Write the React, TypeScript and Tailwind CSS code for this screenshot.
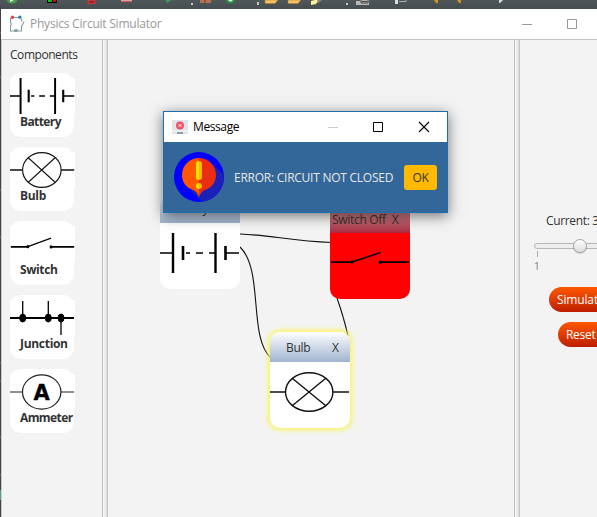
import type { ReactNode } from 'react';

type DrawingProps = { className: string; viewBox?: string };

function BatteryDrawing({ className, viewBox = '0 0 80 50' }: DrawingProps) {
  return (
    <svg viewBox={viewBox} preserveAspectRatio="none" className={className} fill="none" stroke="#000">
      <path d="M0 25H13M26 25H30M36 25H43M49 25H55M65 25H79" strokeWidth="1.4" />
      <path d="M13 5V45M55.5 5V45" strokeWidth="2.4" />
      <path d="M23 18V32M65.5 18V32" strokeWidth="2.6" />
    </svg>
  );
}

function BulbDrawing({ className, viewBox = '0 0 80 50' }: DrawingProps) {
  return (
    <svg viewBox={viewBox} preserveAspectRatio="none" className={className} fill="none" stroke="#111" strokeWidth="1.4">
      <path d="M0 25H15.5M63 25H79M22.5 11.5L55.5 38.5M55.5 11.5L22.5 38.5" />
      <ellipse cx="39.2" cy="25" rx="23.7" ry="19.3" />
    </svg>
  );
}

function SwitchDrawing({ className, viewBox = '0 0 80 50' }: DrawingProps) {
  return (
    <svg viewBox={viewBox} preserveAspectRatio="none" className={className} fill="none" stroke="#000">
      <path d="M1 25.2H22M51 25.2H79" strokeWidth="1.8" />
      <path d="M22 25L50.5 15.5" strokeWidth="1.5" />
      <circle cx="22" cy="25" r="1.8" fill="#000" stroke="none" />
      <circle cx="50.5" cy="25.2" r="1.8" fill="#000" stroke="none" />
    </svg>
  );
}

function PaletteCard({ name, tracking, children }: { name: string; tracking: string; children: ReactNode }) {
  return (
    <div className="flex h-16 w-16 shrink-0 flex-col rounded-[11px] bg-white pt-[5px]">
      <div className="h-9 w-[65px] shrink-0 bg-white">{children}</div>
      <div className={`pl-2.5 text-[12px] leading-4 font-bold whitespace-nowrap ${tracking}`}>{name}</div>
    </div>
  );
}

function Toolbar() {
  return (
    <svg className="h-[9px] w-full shrink-0" viewBox="0 0 597 9">
      <defs>
        <linearGradient id="bar" x2="0" y2="1">
          <stop stopColor="#50575a" />
          <stop offset="1" stopColor="#454d50" />
        </linearGradient>
      </defs>
      <path fill="url(#bar)" d="M0 0H597V9H0Z" />
      <ellipse cx="12" cy="-1" rx="5.5" ry="4.5" fill="#43a047" />
      <path d="M10 0h4l-4 2z" fill="#fff" />
      <path d="M47 0h10v3H47z" fill="#000" />
      <path d="M48 0h4v2h-4z" fill="#0c0" />
      <path d="M53 0h3v2h-3z" fill="#e00" />
      <path d="M88 0h7l1 4h-9z" fill="#cf3535" />
      <path d="M89 2h5" stroke="#612" />
      <path d="M121 1.2h11" stroke="#d95050" strokeWidth="1.8" />
      <path d="M121 .3h11" stroke="#eee" strokeWidth=".7" />
      <path d="M166 0h5l-4 3z" fill="#30a35a" />
      <path d="M191 3h2v2h-2zM257 2h2v3h-2zM543 0h0M346 3h2v2h-2z" fill="#c8c5bd" />
      <path d="M200 0h11v3h-11z" fill="#b5714f" />
      <path d="M205 0v3" stroke="#653d2d" />
      <ellipse cx="230.5" cy="-.5" rx="5" ry="4.2" fill="#218b3b" />
      <ellipse cx="230.5" cy="0" rx="2.2" ry="1.6" fill="#fff" />
      <path d="M265 0h13l-3 3.5h-10zM288 0h13l-3 3.5h-10z" fill="#f1c36b" stroke="#b27820" strokeWidth=".6" />
      <path d="M311 1l4-1h4l-3 4-5 1z" fill="#fff09a" />
      <path d="M317 0h5l-4 3z" fill="#99847a" />
      <path d="M356 1h4v-1h9v5h-13z" fill="#b8b8b8" />
      <path d="M361 0v3h7V0M362 1.5h5" stroke="#444" fill="none" />
      <path d="M395 0h3v4h-3z" fill="#ddd" />
      <path d="M399 1.5h7V0" stroke="#aaa" fill="none" />
      <path d="M434 0h4v3h-2zM457 0h4v3h-2z" fill="#d19221" />
      <path d="M499 0h4l-3 3h-1z" fill="#ddd" />
    </svg>
  );
}

function TitleBar() {
  return (
    <header className="flex h-[31px] shrink-0 items-center border-b border-[#c5c5c5] bg-white pl-2">
      <svg className="h-[18px] w-4" viewBox="0 0 16 18" fill="none" stroke="#849da0" strokeWidth="1.1">
        <path d="M3.5 3.500H1.500V7.500L2.500 9 1.500 10.500V16h4M4.500 2.500h6M12.500 3.500v3M15 6.500L12.500 11.500V16H9" />
        <circle cx="3.500" cy="2.200" r="1.600" fill="#d54435" stroke="none" />
        <circle cx="10.800" cy="2.200" r="1.600" fill="#2674bd" stroke="none" />
        <ellipse cx="7" cy="15.500" rx="2.200" ry="1.500" fill="#849da0" stroke="none" />
      </svg>
      <span className="ml-[5px] text-[12px] tracking-[-0.23px] whitespace-nowrap text-[#999]">Physics Circuit Simulator</span>
      <svg className="ml-auto h-3 w-[75px] shrink-0" viewBox="0 0 75 12" fill="none" stroke="#999">
        <path d="M0 6.500h10M45.500 1.500h9v9h-9z" />
      </svg>
    </header>
  );
}

function Divider() {
  return <div className="w-[6px] shrink-0 border-x border-[#c3c3c3] bg-gradient-to-r from-[#f7f7f7] to-[#dedede]" />;
}

function Palette() {
  return (
    <aside className="flex w-[100px] shrink-0 flex-col gap-2.5 pt-[7px] pl-2">
      <h2 className="h-4 text-[12px] leading-4 tracking-[-0.45px]">Components</h2>
      <PaletteCard name="Battery" tracking="tracking-[-0.6px]"><BatteryDrawing className="h-full w-full" viewBox="0 5 80 40" /></PaletteCard>
      <PaletteCard name="Bulb" tracking="tracking-[-0.3px]"><BulbDrawing className="h-full w-full" viewBox="0 5 80 40" /></PaletteCard>
      <PaletteCard name="Switch" tracking="tracking-[-0.4px]"><SwitchDrawing className="h-full w-full" viewBox="0 2 80 40" /></PaletteCard>
      <PaletteCard name="Junction" tracking="tracking-[-0.3px]">
        <svg viewBox="0 0 65 36" className="h-full w-full" stroke="#000">
          <path d="M0 18H64" strokeWidth="1.800" />
          <path d="M12.700 1V18M38.300 1V18M51 18V35" strokeWidth="1.300" />
          <ellipse cx="12.700" cy="18" rx="3" ry="4" />
          <ellipse cx="38.300" cy="18" rx="3" ry="4" />
          <ellipse cx="51" cy="18" rx="3" ry="4" />
        </svg>
      </PaletteCard>
      <PaletteCard name="Ammeter" tracking="tracking-[-0.6px]">
        <svg viewBox="0 0 65 36" className="h-full w-full" fill="none" stroke="#222" strokeWidth="1.200">
          <path d="M0 18H12.500M51 18H64" />
          <ellipse cx="31.700" cy="18" rx="19.200" ry="17.100" />
          <text x="31.700" y="26" textAnchor="middle" fill="#000" stroke="#000" strokeWidth=".3" fontFamily="DejaVu Sans" fontSize="21" fontWeight="700">A</text>
        </svg>
      </PaletteCard>
    </aside>
  );
}

function Canvas() {
  return (
    <main className="relative w-[406px] shrink-0 overflow-hidden">
      <svg className="absolute inset-0 h-full w-full" viewBox="108 40 406 477" preserveAspectRatio="xMinYMin meet" fill="none" stroke="#111" strokeWidth="1.100">
        <path d="M240 234C270 235 292 241 331 242.500M240 247C264 270 248 338 271 358M337 298Q344 318 348 336" />
      </svg>
      <section className="absolute top-[153px] left-[52px] h-24 w-20 overflow-hidden rounded-[10px] bg-white">
        <div className="flex h-[30px] items-center bg-gradient-to-b from-white to-[#a1b5cf] pt-0.5 pl-2 text-[12px]">
          <span>Battery</span><span className="ml-3">X</span>
        </div>
        <BatteryDrawing className="mt-[5px] h-[50px] w-20" />
      </section>
      <section className="absolute top-[163px] left-[222px] h-24 w-20 overflow-hidden rounded-[10px] bg-[#f00]">
        <div className="flex h-[30px] items-center bg-gradient-to-b from-[#d9a3a7] to-[#a72b43] pt-[3px] pl-0.5 text-[12px] whitespace-nowrap">
          <span className="tracking-[-0.3px]">Switch Off</span><span className="ml-[6px]">X</span>
        </div>
        <SwitchDrawing className="mt-1 h-[50px] w-20" />
      </section>
      <section className="absolute top-[292px] left-[162px] h-24 w-20 overflow-hidden rounded-[10px] bg-white shadow-[0_0_5px_2px_#f8f55f]">
        <div className="flex h-[30px] items-center bg-gradient-to-b from-white to-[#a1b5cf] pt-0.5 pl-4 text-[12px]">
          <span className="w-[46px] tracking-[-0.3px]">Bulb</span><span>X</span>
        </div>
        <BulbDrawing className="mt-[5px] h-[50px] w-20" />
      </section>
    </main>
  );
}

function Controls() {
  return (
    <aside className="w-[150px] shrink-0 pt-[173px]">
      <div className="ml-[26px] h-4 text-[12px] leading-4 tracking-[-0.35px] whitespace-nowrap">Current: 3</div>
      <svg className="mt-1 ml-3 h-10 w-32" viewBox="532 233 128 40">
        <defs><linearGradient id="knob" x2="0" y2="1"><stop stopColor="#fff" /><stop offset="1" stopColor="#ddd" /></linearGradient></defs>
        <rect x="534.500" y="243.500" width="110" height="5" rx="2.500" fill="#eee" stroke="#b8b8b8" />
        <path d="M537.500 251v6" stroke="#aaa" />
        <circle cx="580" cy="247" r="7" fill="#0002" />
        <circle cx="580" cy="246" r="6.500" fill="url(#knob)" stroke="#a5a5a5" />
        <text x="534" y="270" fontSize="10" fill="#777">1</text>
      </svg>
      <button className="mt-[14px] ml-[29px] flex h-[25px] w-[68px] items-center rounded-full bg-gradient-to-b from-[#ff5700] to-[#be1d00] pt-px pl-2 text-[12px] tracking-[-0.15px] whitespace-nowrap text-white">Simulat</button>
      <button className="mt-2.5 ml-[38px] flex h-[25px] w-[50px] items-center rounded-full bg-gradient-to-b from-[#ff5700] to-[#be1d00] pt-px pl-2 text-[12px] tracking-[-0.3px] text-white">Reset</button>
    </aside>
  );
}

function MessageDialog() {
  return (
    <div role="dialog" className="absolute top-[111px] left-[163px] flex h-[102px] w-[285px] flex-col border border-[#1b6dad] bg-[#336699] shadow-[0_3px_13px_#0008]">
      <div className="flex h-[30px] shrink-0 items-center bg-white pl-2 text-black">
        <svg className="h-4 w-4 shrink-0" viewBox="0 0 16 16">
          <path fill="#e1e5ec" d="M0 1h16v14H0z" />
          <path d="M0 12h16" stroke="#f7f7f9" />
          <path d="M5 14h6" stroke="#677582" strokeWidth="1.300" />
          <circle cx="8" cy="6.500" r="4" fill="#ef5366" />
          <path d="M6.500 5l3 3m0-3l-3 3" stroke="#fff" strokeWidth=".8" />
        </svg>
        <span className="ml-[5px] text-[12px] tracking-[-0.4px]">Message</span>
        <svg className="ml-auto mr-[17px] h-3 w-[103px]" viewBox="0 0 103 12" fill="none">
          <path d="M1 6.500h10" stroke="#ccc" />
          <path d="M46.500 1.500h9v9h-9z" stroke="#000" />
          <path d="M92 1l10 10m0-10L92 11" stroke="#000" strokeWidth="1.100" />
        </svg>
      </div>
      <div className="flex flex-1 items-center pl-2.5">
        <svg className="h-[50px] w-[50px] shrink-0" viewBox="0 0 50 50">
          <circle cx="25" cy="25" r="25" fill="#00f" />
          <path d="M37 11L49.500 22A25 25 0 0 1 28 49.800L17 39Z" fill="#1b20b9" />
          <path d="M25 6a17 17 0 0 0-17 17c0 8 5 13 11 15 3 1 5 4 6 7z" fill="#ff5800" />
          <path d="M25 6a17 17 0 0 1 17 17c0 8-5 13-11 15-3 1-5 4-6 7z" fill="#eb2d12" />
          <path d="M25 9a3 3 0 0 0-3 3v13a3 3 0 0 0 3 3zM25 31a3 3 0 0 0 0 6z" fill="#ffe000" />
          <path d="M25 9a3 3 0 0 1 3 3v13a3 3 0 0 1-3 3zM25 31a3 3 0 0 1 0 6z" fill="#fdb600" />
        </svg>
        <span className="ml-2.5 w-[160px] pt-0.5 text-[12px] tracking-[-0.25px] whitespace-nowrap text-[#e6e8e5]">ERROR: CIRCUIT NOT CLOSED</span>
        <button className="ml-2.5 h-[25px] w-[33px] rounded-[3px] bg-[#ffba00] pt-px text-[12px] tracking-[-0.3px] text-[#333]">OK</button>
      </div>
    </div>
  );
}

export default function App() {
  return (
    <div className="relative flex h-[517px] w-[597px] flex-col overflow-hidden bg-[#434343] font-['Open_Sans','Noto_Sans',sans-serif] text-[#333]">
      <Toolbar />
      <div className="flex min-h-0 flex-1">
        <svg className="h-full w-px shrink-0" viewBox="0 9 1 508">
          <path d="M0 9H1V517H0Z" fill="#434343" />
          <path d="M0 77h1M0 237h1M0 363h1M0 437h1M0 475h1" stroke="#85915b" />
          <path d="M0 33h1M0 190h1M0 381h1" stroke="#638aad" />
          <path d="M0 490h1v10H0z" fill="#51a395" />
        </svg>
        <div className="flex w-[596px] flex-col bg-[#f3f3f3]">
          <TitleBar />
          <div className="flex min-h-0 flex-1 overflow-hidden border-l border-[#c8c8c8]">
            <Palette /><Divider /><Canvas /><Divider /><Controls />
          </div>
        </div>
      </div>
      <MessageDialog />
    </div>
  );
}
